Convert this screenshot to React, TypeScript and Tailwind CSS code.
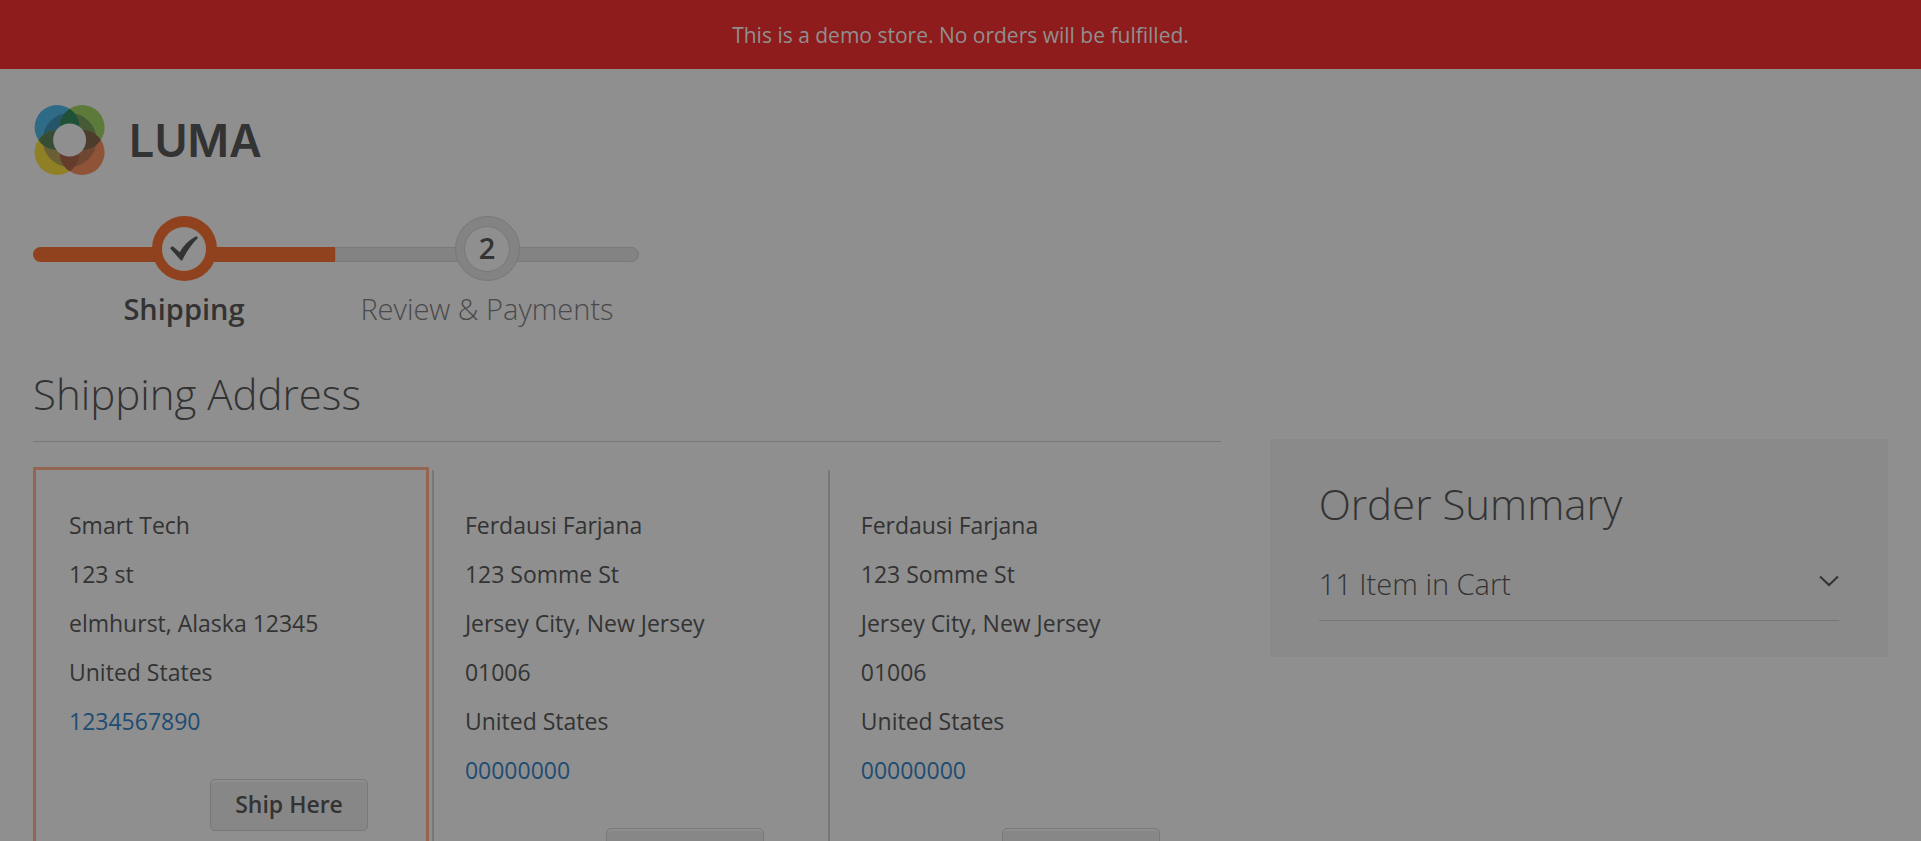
import React from "react";

type Address = {
  lines: string[];
  phone: string;
};

const addresses: Address[] = [
  {
    lines: ["Smart Tech", "123 st", "elmhurst, Alaska 12345", "United States"],
    phone: "1234567890",
  },
  {
    lines: ["Ferdausi Farjana", "123 Somme St", "Jersey City, New Jersey", "01006", "United States"],
    phone: "00000000",
  },
  {
    lines: ["Ferdausi Farjana", "123 Somme St", "Jersey City, New Jersey", "01006", "United States"],
    phone: "00000000",
  },
];

function Logo() {
  return (
    <a href="#" className="flex items-center gap-6 self-start" aria-label="LUMA">
      <svg width="72" height="72" viewBox="-0.6 0 72 72" aria-hidden="true">
        <defs>
          <clipPath id="tl"><circle cx="23.5" cy="23.5" r="22.5" /></clipPath>
          <clipPath id="tr"><circle cx="48.5" cy="23.5" r="22.5" /></clipPath>
          <clipPath id="bl"><circle cx="23.5" cy="48.5" r="22.5" /></clipPath>
          <clipPath id="br"><circle cx="48.5" cy="48.5" r="22.5" /></clipPath>
        </defs>
        <circle cx="23.5" cy="23.5" r="22.5" fill="#2f6a86" />
        <circle cx="48.5" cy="23.5" r="22.5" fill="#5c7a3a" />
        <circle cx="23.5" cy="48.5" r="22.5" fill="#8f7f25" />
        <circle cx="48.5" cy="48.5" r="22.5" fill="#8f5437" />
        <g clipPath="url(#tl)"><circle cx="36" cy="36" r="27" fill="#245569" /></g>
        <g clipPath="url(#tr)"><circle cx="36" cy="36" r="27" fill="#455a35" /></g>
        <g clipPath="url(#bl)"><circle cx="36" cy="36" r="27" fill="#6b6035" /></g>
        <g clipPath="url(#br)"><circle cx="36" cy="36" r="27" fill="#6f4733" /></g>
        <g clipPath="url(#tl)"><circle cx="48.5" cy="23.5" r="22.5" fill="#1f5038" /></g>
        <g clipPath="url(#tl)"><circle cx="23.5" cy="48.5" r="22.5" fill="#374d35" /></g>
        <g clipPath="url(#tr)"><circle cx="48.5" cy="48.5" r="22.5" fill="#4b3c2c" /></g>
        <g clipPath="url(#bl)"><circle cx="48.5" cy="48.5" r="22.5" fill="#653c2b" /></g>
        <circle cx="36" cy="36" r="16.5" fill="#8f8f8f" />
      </svg>
      <span className="font-[Inter,sans-serif] text-[45px] leading-none font-semibold">LUMA</span>
    </a>
  );
}

function Progress() {
  return (
    <ol className="mt-10 flex w-[606px] max-w-full">
      <li className="flex w-[302px] flex-col items-center">
        <div className="grid w-full grid-cols-1 grid-rows-1 items-center justify-items-center">
          <span className="col-start-1 row-start-1 mt-[11px] h-[15px] w-full rounded-l-full bg-[#8f421d]" />
          <span className="z-10 col-start-1 row-start-1 flex size-[65px] items-center justify-center rounded-full bg-[#8f421d]">
            <span className="flex size-[44px] items-center justify-center rounded-full bg-[#8f8f8f]">
              <svg width="28" height="25" viewBox="0 0 28 25" aria-hidden="true">
                <path d="M0.3 12.4C1.2 10.6 2.7 10 4 11.2L9.7 16.2C13.4 9.6 18.7 4.1 25.8 0.5C27 0 28.3 1.3 27.4 2.4C21 8.8 16.2 16 12.6 23.8C12.2 24.8 11.1 24.8 10.5 24Z" fill="#333333" />
              </svg>
            </span>
          </span>
        </div>
        <span className="mt-2 text-[29px] leading-10 font-semibold">Shipping</span>
      </li>
      <li className="flex flex-1 flex-col items-center">
        <div className="grid w-full grid-cols-1 grid-rows-1 items-center justify-items-center">
          <span className="col-start-1 row-start-1 mt-[11px] h-[15px] w-full rounded-r-full border border-[#787878] bg-[#838383]" />
          <span className="z-10 col-start-1 row-start-1 flex size-[65px] items-center justify-center rounded-full border border-[#787878] bg-[#838383]">
            <span className="flex size-[46px] items-center justify-center rounded-full border border-[#787878] bg-[#8f8f8f] pb-0.5 text-[29px] leading-none font-semibold">
              2
            </span>
          </span>
        </div>
        <span className="mt-2 text-[29px] leading-10 font-light whitespace-nowrap text-[#4a4a4a]">Review &amp; Payments</span>
      </li>
    </ol>
  );
}

function AddressCard({ address, index }: { address: Address; index: number }) {
  const selected = index === 0;
  return (
    <li className={selected ? "border-[3px] border-[#946551]" : "border-[3px] border-transparent"}>
      <div
        className={
          selected
            ? "flex h-full flex-col px-[33px] pt-[31px] pb-8"
            : "flex h-full flex-col border-l-2 border-[#787878] pt-[31px] pr-[33px] pb-8 pl-[31px]"
        }
      >
        <address className="text-[23px] leading-[49px] not-italic">
          {address.lines.map((line) => (
            <div key={line}>{line}</div>
          ))}
          <a href={"tel:" + address.phone} className="block text-[#204c72]">
            {address.phone}
          </a>
        </address>
        <button
          type="button"
          className="mt-[33px] mr-[25px] h-[52px] self-end rounded-[5px] border border-[#787878] bg-[#878787] px-6 pb-0.5 text-[23px] leading-none font-semibold shadow-[inset_0_2px_1px_0_#8f8f8f]"
        >
          Ship Here
        </button>
      </div>
    </li>
  );
}

export default function App() {
  return (
    <div className="h-screen overflow-hidden bg-[#8f8f8f] font-['Open_Sans',sans-serif] text-[#333333]">
      <p className="bg-[#8f1c1c] pt-[21px] pb-[19px] text-center text-[21px] leading-[29px] text-[#8f8f8f]">
        This is a demo store. No orders will be fulfilled.
      </p>
      <div className="px-[33px] pt-[35px]">
        <header className="flex flex-col">
          <Logo />
        </header>
        <Progress />
        <div className="mt-8 flex items-start">
          <main className="w-2/3 pr-[49px]">
            <h1 className="border-b border-[#787878] pt-[5px] pb-[19px] text-[42px] leading-[56px] font-light">Shipping Address</h1>
            <ul className="mt-[25px] grid grid-cols-3">
              {addresses.map((address, i) => (
                <AddressCard key={i} address={address} index={i} />
              ))}
            </ul>
          </main>
          <aside className="mt-[78px] w-1/3 bg-[#8a8a8a] px-[49px] pt-[35px] pb-9">
            <h2 className="text-[42px] leading-[60px] font-light">Order Summary</h2>
            <button
              type="button"
              aria-expanded="false"
              className="mt-4 flex w-full items-center justify-between border-b border-[#787878] pt-[7px] pb-[9px] text-left text-[29px] leading-[54px] font-light"
            >
              <span>11 Item in Cart</span>
              <svg className="mb-1.5" width="20" height="12" viewBox="0 0 20 12" fill="none" stroke="#333333" strokeWidth="2" aria-hidden="true">
                <path d="M1 1.5L10 10L19 1.5" />
              </svg>
            </button>
          </aside>
        </div>
      </div>
    </div>
  );
}
